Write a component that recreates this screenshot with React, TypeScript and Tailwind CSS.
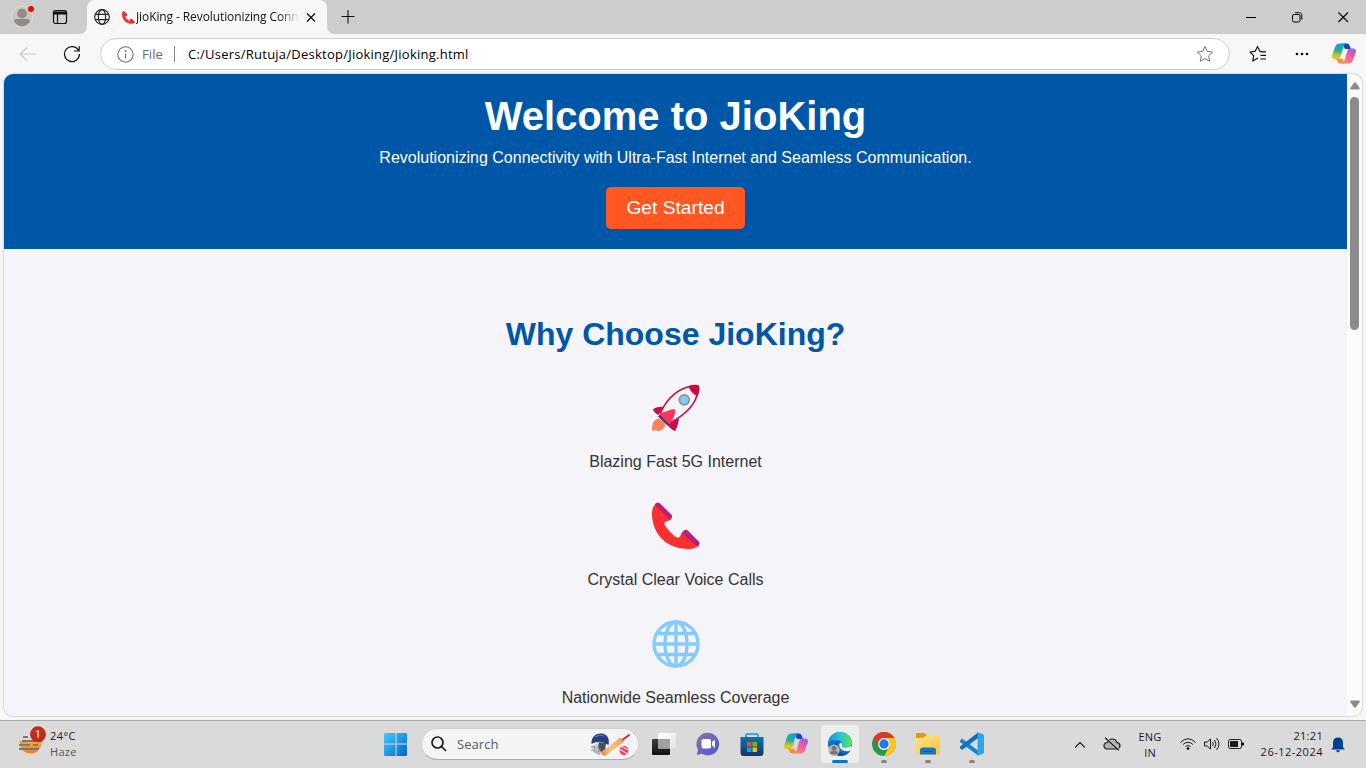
import React from "react";

const ui = "font-['Open_Sans','Noto_Sans',sans-serif]";

function Phone({ className }: { className: string }) {
  return (
    <svg viewBox="0 0 48 48" className={className}>
      <path d="M3.500 2C0 6 0 9 0 13c1 20 15 34 37 34 4 0 7-1 9-3.500L31 29.500c-2 1.500-2 3.500-3 5s-3 1.500-5 0c-4-3.500-8-7.500-10-11-1-2-.5-3.500 1-4 2-1 4-1 5-2.500Z" fill="#f92f30" />
      <path d="M3 2.500C4 .5 6-.2 7.800 1.200L19.500 12.700c1.300 1.500.8 3.500-1.500 5.300Z" fill="#bb1d80" />
      <path d="M30 31.500c1-2.700 3.500-4.800 5.800-2.900L47 39.800c1 1.200.5 3.200-1.400 5.200Z" fill="#bb1d80" />
    </svg>
  );
}

function Rocket() {
  return (
    <svg viewBox="0 0 48 48" className="size-12">
      <path d="M7 34.500c-4 .5-6 3.500-6.500 6L0 46.500c2 .5 3 0 4-1l1 1.700c3-.2 9-2.700 8.500-7.700Z" fill="#ff8257" />
      <path d="M11 23C7 22.500 3.500 23.500 1 25.500c1 2.500 3 4.500 5.500 5.500Zm16 12c-.5 4-2 8-3.500 11.500-1.500.5-2.500 0-3.500-1l-4.500-4 6-6Z" fill="#ca0b4a" />
      <path d="M8.500 28.500C15 15 26 4.500 40 2c4-.5 6.500 1 6 5-2 14-15 25-28 32Z" fill="#f4f4f4" stroke="#ca0b4a" strokeWidth="1.700" />
      <path d="M36.500 2C41 .3 45.500.5 47 1.500c1 2 .5 6.500-1.300 10.500-4-1-8.200-5.500-9.200-10Z" fill="#ca0b4a" />
      <path d="m6 32.500 10 9.500 2.500-2L8.500 29.500Z" fill="#533566" />
      <path d="m7.500 30.500 3.500-2.200c4-.8 8-3.300 11.500-3.300C24.500 26.500 22 35 17.500 40.500Z" fill="#fb3561" />
      <circle cx="32.300" cy="15.800" r="5" fill="#83cbff" stroke="#929297" strokeWidth="1.700" />
    </svg>
  );
}

function Globe({ className, width, color }: { className: string; width: number; color: string }) {
  return (
    <svg viewBox="0 0 48 48" className={className} fill="none" stroke={color} strokeWidth={width}>
      <circle cx="24" cy="24" r="22" />
      <ellipse cx="24" cy="24" rx="11" ry="22" />
      {width === 3.3 ? <path d="M24 2v44M2 24h44M5 13.500h38M5 34.500h38" /> : <path d="M4 16h40M4 32h40" />}
    </svg>
  );
}

function Copilot() {
  return (
    <svg viewBox="0 0 24 24" className="size-6">
      <defs>
        <linearGradient id="cpA" x1="0.400" y1="0" x2="0.300" y2="1"><stop stopColor="#159ce5" /><stop offset=".45" stopColor="#2aae8e" /><stop offset=".8" stopColor="#d7c92c" /><stop offset="1" stopColor="#f5b82e" /></linearGradient>
        <linearGradient id="cpB" x1="0.800" y1="0" x2="0.100" y2="1"><stop stopColor="#9b5bea" /><stop offset=".5" stopColor="#f2619a" /><stop offset="1" stopColor="#fd9458" /></linearGradient>
      </defs>
      <path d="M10 1.500h5c2 0 2.500 1.500 3 3l1 2.500h-6Z" fill="#1743c4" />
      <path d="M8 1.500h6c-2 1-2.500 3-3.500 6.500L9 13.500c-.7 3-2 3.500-4 3.500H3c-3 0-3.500-2-2.500-5L3 5C4 2.500 5.500 1.500 8 1.500Z" fill="url(#cpA)" />
      <path d="m4 17 6-.5 3 5H9c-3 0-3-1.500-3.500-2.500Z" fill="#f1913d" />
      <path d="M16 21.500h-6c2-1 2.500-3 3.500-6.500l1.500-5c.7-3 2-3.500 4-3.500h2c3 0 3.500 2 2.500 5L21 18c-1 2.500-2.500 3.500-5 3.500Z" fill="url(#cpB)" />
    </svg>
  );
}

function TabStrip() {
  return (
    <div className="flex h-[34px] bg-[#cdcdcd]">
      <div className="flex w-[87px] items-end">
        <div className="relative mb-[6px] ml-[11px] size-[22px]">
          <svg viewBox="0 0 22 22" className="size-[22px]">
            <circle cx="11" cy="11" r="10.500" fill="#c9c6c2" stroke="#dedbd5" />
            <circle cx="11" cy="7.500" r="4.800" fill="#908d89" />
            <path d="M3 15.500c0-1.500 1-2.500 2.500-2.500h11c1.500 0 2.500 1 2.500 2.500-2 3-5 4.800-8 4.800s-6-1.800-8-4.800Z" fill="#908d89" />
          </svg>
          <span className="absolute left-[17px] top-0 size-1.5 rounded-full bg-[#e80b0b]" />
        </div>
        <svg viewBox="0 0 16 16" className="mb-[9px] ml-[19px] size-4" fill="none" stroke="#111" strokeWidth="1.200">
          <rect x="1.500" y="1.500" width="13" height="13" rx="2" />
          <path d="M1.500 3h13v2h-13Z" fill="#111" /><path d="M5.500 5v9" />
        </svg>
        <svg viewBox="0 0 8 8" className="ml-auto size-2" fill="#f7f7f7"><path d="M8 0v8H0q8 0 8-8Z" /></svg>
      </div>
      <div className="flex w-60 items-center rounded-t-lg bg-[#f7f7f7]">
        <Globe className="ml-[7px] size-4" width={3.4} color="#222" />
        <Phone className="ml-3 size-[13px]" />
        <span className={`${ui} ml-px w-[163px] whitespace-nowrap text-[12px] tracking-[-0.1px] text-[#111] [mask-image:linear-gradient(to_right,#000_88%,transparent)]`}>JioKing - Revolutionizing Conn</span>
        <svg viewBox="0 0 10 10" className="ml-[7px] size-2.5" stroke="#111" strokeWidth="1.300"><path d="m1 1.500 8 8M9 1.500l-8 8" /></svg>
      </div>
      <svg viewBox="0 0 8 8" className="mt-auto size-2" fill="#f7f7f7"><path d="M0 0v8h8Q0 8 0 0Z" /></svg>
      <svg viewBox="0 0 14 14" className="ml-[6px] mt-[10px] size-[14px]" stroke="#111"><path d="M.5 6.500h13M7 0v13.500" strokeWidth="1.100" /></svg>
      <div className="ml-auto mt-[12px] flex">
        <svg viewBox="0 0 10 10" className="mr-9 size-2.5" stroke="#000"><path d="M0 5.500h10" /></svg>
        <svg viewBox="0 0 11 11" className="mr-[35px] size-[11px]" fill="none" stroke="#000"><rect x=".5" y="2.500" width="7.500" height="7.500" rx="1.500" /><path d="M3 .8h4.500c1.300 0 2.300 1 2.300 2.300v4.500" /></svg>
        <svg viewBox="0 0 11 11" className="mr-[17px] size-[11px]" stroke="#000" strokeWidth="1.100"><path d="m.5.5 9.500 9.500m0-9.500-9.500 9.500" /></svg>
      </div>
    </div>
  );
}

function Toolbar() {
  return (
    <div className="flex h-10 items-center bg-[#f7f7f7]">
      <svg viewBox="0 0 18 16" className="ml-[19px] h-4 w-[18px]" fill="none" stroke="#c9c9c9" strokeWidth="1.100"><path d="M17 8H1m7-6.500L1 8l7 6.500" /></svg>
      <svg viewBox="0 0 18 18" className="ml-[26px] size-[18px]" fill="none" stroke="#111" strokeWidth="1.200"><path d="M15.600 5.500A7.500 7.500 0 1 0 16.500 9M16.200 1v5H11" /></svg>
      <div className={`${ui} ml-[19px] flex h-8 w-[1130px] items-center rounded-full border border-[#cfcfcf] bg-white text-[13px]`}>
        <svg viewBox="0 0 17 17" className="ml-4 size-[17px]" fill="none" stroke="#737373" strokeWidth="1.100"><circle cx="8.500" cy="8.500" r="7.700" /><path d="M8.500 7.500v5" /><circle cx="8.500" cy="5" r=".5" /></svg>
        <span className="ml-2 mt-px w-[21px] tracking-[0.1px] text-[#696969]">File</span>
        <span className="ml-[11px] h-4 w-px bg-[#858585]" />
        <span className="ml-[13px] mt-px whitespace-nowrap tracking-[0.24px] text-black">C:/Users/Rutuja/Desktop/Jioking/Jioking.html</span>
        <svg viewBox="0 0 18 18" className="ml-auto mr-[15px] size-[18px]" fill="none" stroke="#737373" strokeLinejoin="round"><path d="m9 1.500 2.300 4.900 5.300.7-3.900 3.700 1 5.400L9 13.600l-4.700 2.600 1-5.400-3.900-3.700 5.300-.7Z" /></svg>
      </div>
      <svg viewBox="0 0 18 18" className="ml-[19px] size-[18px]" fill="none" stroke="#111" strokeWidth="1.200" strokeLinejoin="round"><path d="m9 13-5.200 3 .9-5.300L1 7l5.200-.8L8.500 1.500l2.300 4.700 1.500.3M11.500 6.800H17M11.500 10.300H17M11.500 14H17" /></svg>
      <svg viewBox="0 0 14 4" className="ml-7 h-1 w-[14px]"><circle cx="2" cy="2" r="1.300" /><circle cx="7" cy="2" r="1.300" /><circle cx="12" cy="2" r="1.300" /></svg>
      <div className="ml-[23px]"><Copilot /></div>
    </div>
  );
}

function Feature({ icon, label }: { icon: React.ReactNode; label: string }) {
  return (
    <div className="flex h-[118px] flex-col items-center">
      {icon}
      <p className="mt-[21px] text-base leading-[18px] text-[#333]">{label}</p>
    </div>
  );
}

function Page() {
  return (
    <div className="mx-1 flex h-[642px] overflow-hidden rounded-[9px] bg-[#fbfbfb] shadow-[0_0_2px_#999]">
      <main className="flex w-[1343px] flex-col bg-[#f4f4f9] text-center font-['Liberation_Sans',Arial,sans-serif]">
        <header className="flex h-[175px] shrink-0 flex-col items-center bg-[#0056a7] pt-[19px] text-white">
          <h1 className="text-[40px] font-bold leading-[46px]">Welcome to JioKing</h1>
          <p className="mt-[9px] text-base leading-[19px]">Revolutionizing Connectivity with Ultra-Fast Internet and Seamless Communication.</p>
          <button className="mt-5 h-[42px] w-[139px] rounded-[5px] bg-[#ff5722] text-[19.2px] leading-[42px]">Get Started</button>
        </header>
        <section className="pt-[67px]">
          <h2 className="text-[32px] font-bold leading-9 text-[#0056a7]">Why Choose JioKing?</h2>
          <div className="mt-8">
            <Feature icon={<Rocket />} label="Blazing Fast 5G Internet" />
            <Feature icon={<Phone className="size-12" />} label="Crystal Clear Voice Calls" />
            <Feature icon={<Globe className="size-12" width={3.3} color="#83cbff" />} label="Nationwide Seamless Coverage" />
          </div>
        </section>
      </main>
      <div className="flex w-[15px] flex-col items-center pt-2">
        <svg viewBox="0 0 10 8" className="h-2 w-2.5"><path d="M4 .8Q5-.4 6 .8l3.500 5q1 1.700-1 1.700h-7q-2 0-1-1.700Z" fill="#8b8b8b" /></svg>
        <div className="mt-[7px] h-[233px] w-[9px] rounded-full bg-[#8b8b8b]" />
        <svg viewBox="0 0 10 8" className="mb-2 mt-auto h-2 w-2.5 rotate-180"><path d="M4 .8Q5-.4 6 .8l3.500 5q1 1.700-1 1.700h-7q-2 0-1-1.700Z" fill="#8b8b8b" /></svg>
      </div>
    </div>
  );
}

function Cricket() {
  return (
    <svg viewBox="0 0 40 24" className="h-6 w-10">
      <defs><linearGradient id="bat" x1="1" y1="0" x2="0" y2="1"><stop stopColor="#e89c50" /><stop offset=".6" stopColor="#f9c689" /><stop offset="1" stopColor="#d98c45" /></linearGradient></defs>
      <path d="M1 14 9 9l7 2-1 6-4 5q-9-1-10-8Z" fill="#d2d3d5" />
      <path d="m9 9 7 1-1 8-4 1-3-4Z" fill="#4b5058" />
      <path d="M1.500 11C1 4 6 0 11 .5c6 0 9 5 7.500 11.500l-5-2.500C10 8 6 9 1.500 11Z" fill="#263f82" />
      <path d="M5 4q4-3 9-1" stroke="#6681bd" fill="none" />
      <path d="M1 13.500 11 16M1 17l11 2M4 12l1 7 5 2.500M8 12l1 9" stroke="#91959b" fill="none" strokeWidth=".8" />
      <path d="m30.500 4.500 4 4L17 21.500q-2.500 2.500-4.500.5-2-2 0-4Z" fill="url(#bat)" />
      <path d="m33 6.500 6-4.500" stroke="#d52747" strokeWidth="2" strokeLinecap="round" />
      <circle cx="34" cy="17.500" r="4.500" fill="#ea3d60" /><path d="m30 16.500 7 4M31.500 13.500l7 3.500" stroke="#ffdbe5" strokeWidth="1.300" />
    </svg>
  );
}

function AppIcon({ children, dot }: { children: React.ReactNode; dot?: boolean }) {
  return (
    <div className="flex h-12 w-11 flex-col items-center pt-[11px]">
      <div className="size-6">{children}</div>
      {dot && <span className="mt-1 h-[3px] w-1.5 shrink-0 rounded-full bg-[#858585]" />}
    </div>
  );
}

function Taskbar() {
  return (
    <div className={`${ui} flex h-12 border-t border-[#ababab] bg-[#dadada] text-[11px] text-[#1b1b1b]`}>
      <div className="flex w-[374px]">
        <svg viewBox="0 0 30 30" className="ml-[18px] mt-1 h-[30px] w-[30px]">
          <defs><linearGradient id="sun" x1="0" y1="0" x2="0" y2="1"><stop stopColor="#ffc75d" /><stop offset="1" stopColor="#f17e16" /></linearGradient></defs>
          <circle cx="12.500" cy="17.500" r="11" fill="url(#sun)" />
          <path d="M0 5h25v10.500H0Z" fill="#dadada" />
          <path d="M5 12h5M4 16h20M1 19.800h11m3 0h5M1 24h20" stroke="#777" strokeWidth="1.800" />
          <circle cx="20" cy="9.300" r="8" fill="#c42b1c" />
          <text x="20" y="13.300" textAnchor="middle" fontSize="11" fill="white">1</text>
        </svg>
        <div className="ml-[2px] pt-[7px] leading-4"><div className="tracking-[0.4px]">24°C</div><div className="tracking-[0.3px] text-[#555]">Haze</div></div>
      </div>
      <AppIcon>
        <svg viewBox="0 0 24 24" className="size-6"><defs><linearGradient id="win" x2="1" y2="1"><stop stopColor="#46cbfa" /><stop offset="1" stopColor="#0067cc" /></linearGradient></defs><path d="M1 1h10.500v10.500H0V2q0-1 1-1Zm11.500 0H22q1 0 1 1v9.500H12.500ZM0 12.500h11.500V24H1q-1 0-1-1Zm12.500 0H23V23q0 1-1 1h-9.500Z" fill="url(#win)" /></svg>
      </AppIcon>
      <div className="ml-[3px] mt-[7px] flex h-8 w-[218px] items-center rounded-full border border-b-[#aaa] border-[#d0d0d0] bg-[#f4f4f4]">
        <svg viewBox="0 0 16 16" className="ml-[9px] size-4" fill="none" stroke="#1b1b1b" strokeWidth="1.700"><circle cx="6.500" cy="6.500" r="5.500" /><path d="m10.500 10.500 4 4" strokeLinecap="round" /></svg>
        <span className="ml-[10px] mt-px text-[13px] tracking-[0.05px] text-[#5b5b5b]">Search</span>
        <div className="ml-auto mr-2 mt-px"><Cricket /></div>
      </div>
      <div className="ml-[3px] flex">
        <AppIcon><svg viewBox="0 0 24 24" className="size-6"><defs><linearGradient id="tv" y2="1" x2="0"><stop stopColor="#3d3d3d" /><stop offset="1" stopColor="#101010" /></linearGradient><linearGradient id="tw" x2="1" y2="1"><stop stopColor="#fff" /><stop offset="1" stopColor="#e3e3e3" /></linearGradient></defs><rect x="0" y="7" width="18" height="16" rx="1" fill="url(#tv)" /><rect x="6" y="1" width="18" height="15.500" rx="1" fill="url(#tw)" /><path d="M6 7h12v9.500H6Z" fill="#a0a0a0" /></svg></AppIcon>
        <AppIcon><svg viewBox="0 0 24 24" className="size-6"><defs><linearGradient id="chat" x2="1" y2="1"><stop stopColor="#a16e9c" /><stop offset=".35" stopColor="#7168bb" /><stop offset="1" stopColor="#5058c9" /></linearGradient></defs><path d="M12 .8a11.300 11.300 0 1 1-6 21l-4 1q-1.500.3-1-1l1-4A11.300 11.300 0 0 1 12 .8Z" fill="url(#chat)" /><rect x="5.500" y="7" width="9.500" height="9.500" rx="1.800" fill="white" /><path d="m16 10 3-2.500v8.500l-3-2.500Z" fill="white" /></svg></AppIcon>
        <AppIcon><svg viewBox="0 0 24 24" className="size-6"><defs><linearGradient id="store" x2="0" y2="1"><stop stopColor="#1171b7" /><stop offset="1" stopColor="#153765" /></linearGradient></defs><path d="M6 6.500V3q0-1 1-1h10q1 0 1 1v3.500" fill="none" stroke="#21b6e9" strokeWidth="2" /><path d="M.5 5h23v15.500q0 3.500-3 3.500h-17q-3 0-3-3.500Z" fill="url(#store)" /><path fill="#f25022" d="M7 10h4.500v4.500H7Z" /><path fill="#7fba00" d="M12.500 10H17v4.500h-4.500Z" /><path fill="#00a4ef" d="M7 15.500h4.500V20H7Z" /><path fill="#ffb900" d="M12.500 15.500H17V20h-4.500Z" /></svg></AppIcon>
        <AppIcon><Copilot /></AppIcon>
        <div className="mx-[3px] mt-1 flex h-[38px] w-[38px] flex-col items-center rounded bg-[#eeeeee] pt-[7px]">
          <svg viewBox="0 0 24 24" className="size-6 shrink-0">
            <defs><linearGradient id="edge"><stop stopColor="#168bd9" /><stop offset=".5" stopColor="#2cc5d2" /><stop offset="1" stopColor="#63dc55" /></linearGradient></defs>
            <circle cx="12" cy="12" r="12" fill="#0876c8" />
            <path d="M0 11C1 4 6 0 12 0c7 0 12 5 12 10 0 4-3 6-7 6-3 0-4-1-3-2.500 1-2 0-5-5-5.500-4 0-8 1-9 3Z" fill="url(#edge)" />
            <path d="M10 10c-3 3-1 9 4 11 3 1 6 0 9-3-4 6-9 7-14 5-6-4-5-11 1-13Z" fill="#104f98" />
            <path d="M13 10.500c2 2 .5 3 .8 4 .5 1.500 5 1.800 8 .2 1.500-.8 2-.5 1.800 1.500L23 18c-3 2-8 1.500-10.500-1.500-2-2.500-1.500-5 .5-6Z" fill="#eee" />
            <circle cx="6" cy="18.200" r="5.600" fill="#bbb6ae" /><circle cx="6" cy="16.200" r="2.500" fill="#777" /><path d="M2 21c0-3 8-3 8 0-2 2-6 2-8 0Z" fill="#777" />
          </svg>
          <span className="mt-1 h-[3px] w-4 shrink-0 rounded-full bg-[#0078d4]" />
        </div>
        <AppIcon dot><svg viewBox="0 0 24 24" className="size-6"><circle cx="12" cy="12" r="12" fill="#279847" /><path d="M1.600 6A12 12 0 0 1 22.400 6H12a6 6 0 0 0-5.200 9Z" fill="#df372c" /><path d="M22.400 6A12 12 0 0 1 12 24l5.200-9A6 6 0 0 0 12 6Z" fill="#ffc51c" /><circle cx="12" cy="12" r="6" fill="white" /><circle cx="12" cy="12" r="4.700" fill="#2678e8" /></svg></AppIcon>
        <AppIcon dot><svg viewBox="0 0 24 24" className="size-6"><defs><linearGradient id="folder" x2="1" y2="1"><stop stopColor="#ffe18b" /><stop offset="1" stopColor="#fbc536" /></linearGradient></defs><path d="M0 8V2q0-1 1-1h7l3 2-3 5Z" fill="#dc9f0b" /><path d="M8 5q1-1 3-1h12q1 0 1 1v17.500H0V6h6q1 0 2-1Z" fill="url(#folder)" /><path d="M4 22.500V18q0-2.500 3-2.500h10q3 0 3 2.500v4.500Z" fill="#1478bf" /><path d="M8 19.500h8" stroke="#155692" /></svg></AppIcon>
        <AppIcon dot><svg viewBox="0 0 24 24" className="size-6"><path d="m0 8.500 2-2 16 12v5L0 10Z" fill="#1386cc" /><path d="m0 16 2 2L18 6V.5L0 14.500Z" fill="#0b72b5" /><path d="m17.500.3 5.500 2q1 .5 1 1.500v16.500q0 1-1 1.500l-5.500 2Z" fill="#2ba4ed" /></svg></AppIcon>
      </div>
      <div className="ml-auto flex items-center">
        <svg viewBox="0 0 10 6" className="mr-[18px] h-1.5 w-2.5" fill="none" stroke="#1b1b1b" strokeWidth="1.200"><path d="m0 5.500 5-5 5 5" /></svg>
        <svg viewBox="0 0 18 14" className="mb-px mr-[17px] h-[14px] w-[18px]" fill="none" stroke="#1b1b1b" strokeWidth="1.200"><path d="M4.500 12q-3.500 0-3.500-3.200T4.500 5.500Q6 2 9.500 2t4.500 3.500q3 .5 3 3.300T14 12Z" fill="#b0b0b0" /><path d="M3 1 17 12.500" stroke="#dadada" strokeWidth="1.200" /><path d="m2 .8 14 12.500" /></svg>
        <div className="mr-[18px] w-6 text-center leading-4 tracking-[0.15px]">ENG<br />IN</div>
        <svg viewBox="0 0 16 12" className="mb-[2px] mr-2 h-3 w-4" fill="none" stroke="#1b1b1b"><path d="M.5 4.500Q8-3 15.500 4.500M3 6.500q5-4.500 10 0M5.500 8.500q2.500-2 5 0" /><circle cx="8" cy="10.500" r="1" fill="#1b1b1b" /></svg>
        <svg viewBox="0 0 16 14" className="mb-[2px] mr-2 h-[14px] w-4" fill="none" stroke="#1b1b1b"><path d="M.5 5v4h2.700l3.300 3V2L3.200 5ZM8.500 5q1.500 2 0 4M10.500 3q3 4 0 8M12.500 1q5 6 0 12" /></svg>
        <svg viewBox="0 0 16 10" className="mb-[2px] h-2.5 w-4" fill="none" stroke="#1b1b1b"><rect x=".5" y=".5" width="13" height="9" rx="2" /><path d="M3 3h6v4H3Z" fill="#1b1b1b" strokeWidth="2" /><path d="M15 3.500v3" strokeWidth="2" /></svg>
        <div className="mb-[2px] ml-4 flex w-[63px] flex-col items-end whitespace-nowrap leading-4"><span className="tracking-[0.3px]">21:21</span><span className="tracking-[0.5px]">26-12-2024</span></div>
        <svg viewBox="0 0 14 16" className="ml-2 mr-[21px] h-4 w-[14px]" fill="#003f92"><path d="M2 6q0-5.500 5-5.500T12 6v4l1.700 2.500H.3L2 10Zm3 7.300h4q-.5 2-2 2t-2-2Z" /></svg>
      </div>
    </div>
  );
}

export default function App() {
  return (
    <div className="flex h-[768px] w-[1366px] flex-col overflow-hidden bg-[#f7f7f7]">
      <TabStrip />
      <Toolbar />
      <Page />
      <div className="h-1 shrink-0" />
      <Taskbar />
    </div>
  );
}
